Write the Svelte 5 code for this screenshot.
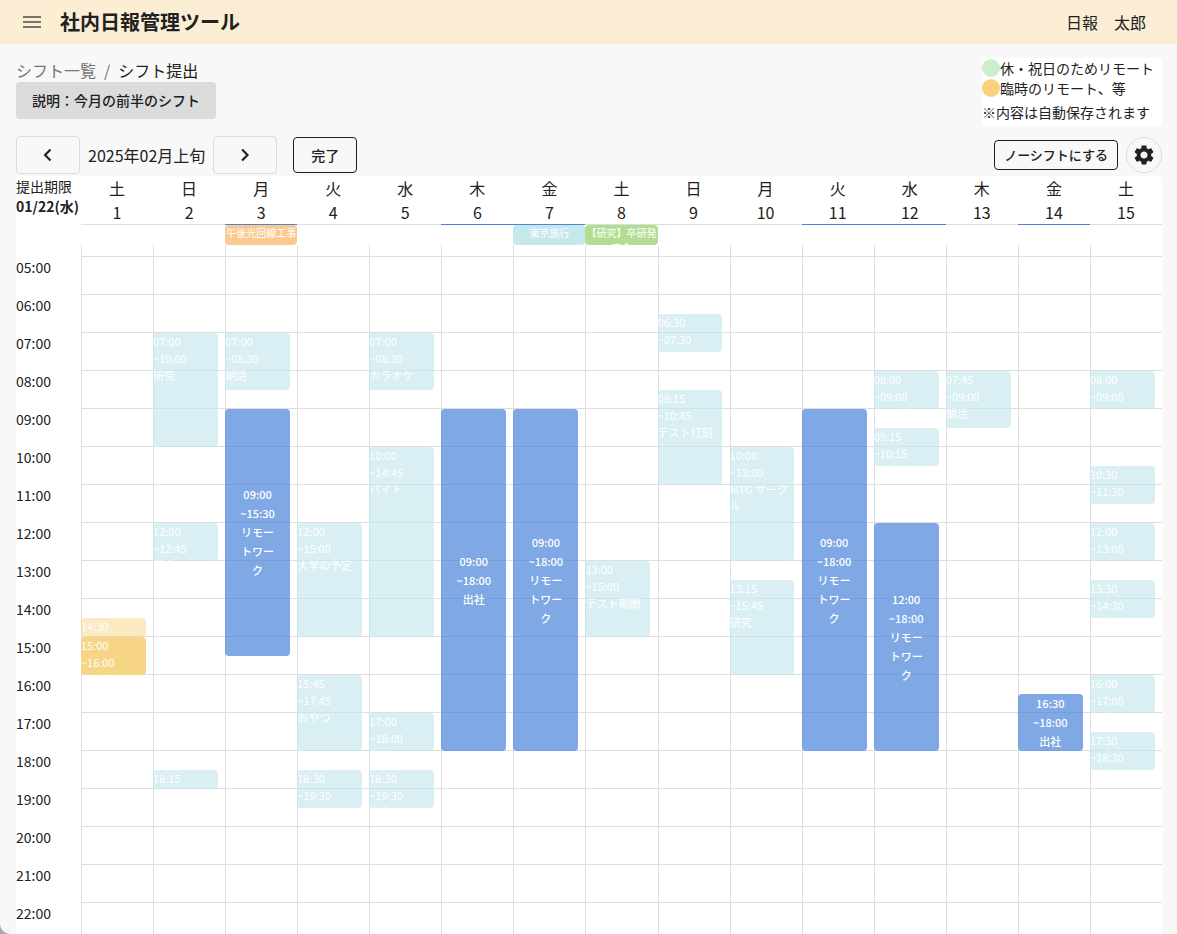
<script lang="ts">
  import { onMount } from "svelte";

  type Plan = { from: string; to: string; title: string; row: number; span: number; kind?: string };
  type Day = {
    week: string;
    allDay?: { title: string; color: string };
    shifts?: Plan[];
    plans?: Plan[];
  };

  const HOUR_HEIGHT = 38;
  const hours = Array.from({ length: 24 }, (_, i) => String(i).padStart(2, "0") + ":00");

  // row is the hour the block starts on, span is its length in hours
  const plan = (from: string, to: string, title: string, row: number, span: number, kind = "") => ({
    from,
    to,
    title,
    row,
    span,
    kind,
  });

  const days: Day[] = [
    {
      week: "土",
      plans: [
        plan("14:30", "15:00", "打ち合わせ", 14.5, 0.5, "temp light"),
        plan("15:00", "16:00", "サークル", 15, 1, "temp"),
      ],
    },
    {
      week: "日",
      plans: [
        plan("07:00", "10:00", "研究", 7, 3),
        plan("12:00", "12:45", "昼食", 12, 1),
        plan("18:15", "18:45", "夕食", 18.5, 0.5),
      ],
    },
    {
      week: "月",
      allDay: { title: "午後光回線工事", color: "orange" },
      plans: [plan("07:00", "08:30", "朝活", 7, 1.5)],
      shifts: [plan("09:00", "15:30", "リモートワーク", 9, 6.5)],
    },
    {
      week: "火",
      plans: [
        plan("12:00", "15:00", "大学の予定", 12, 3),
        plan("15:45", "17:45", "おやつ", 16, 2),
        plan("18:30", "19:30", "研究", 18.5, 1),
      ],
    },
    {
      week: "水",
      plans: [
        plan("07:00", "08:30", "カラオケ", 7, 1.5),
        plan("10:00", "14:45", "バイト", 10, 5),
        plan("17:00", "18:00", "散歩", 17, 1),
        plan("18:30", "19:30", "夕食", 18.5, 1),
      ],
    },
    { week: "木", shifts: [plan("09:00", "18:00", "出社", 9, 9)] },
    {
      week: "金",
      allDay: { title: "東京旅行", color: "cyan" },
      shifts: [plan("09:00", "18:00", "リモートワーク", 9, 9)],
    },
    {
      week: "土",
      allDay: { title: "【研究】卒研発表会", color: "green" },
      plans: [plan("13:00", "15:00", "テスト期間", 13, 2)],
    },
    {
      week: "日",
      plans: [
        plan("06:30", "07:30", "研究", 6.5, 1),
        plan("08:15", "10:45", "テスト打刻", 8.5, 2.5),
      ],
    },
    {
      week: "月",
      plans: [
        plan("10:00", "13:00", "MTG サークル", 10, 3),
        plan("13:15", "15:45", "研究", 13.5, 2.5),
      ],
    },
    { week: "火", shifts: [plan("09:00", "18:00", "リモートワーク", 9, 9)] },
    {
      week: "水",
      plans: [
        plan("08:00", "09:00", "カラオケ", 8, 1),
        plan("09:15", "10:15", "研究", 9.5, 1),
      ],
      shifts: [plan("12:00", "18:00", "リモートワーク", 12, 6)],
    },
    { week: "木", plans: [plan("07:45", "09:00", "朝活", 8, 1.5)] },
    { week: "金", shifts: [plan("16:30", "18:00", "出社", 16.5, 1.5)] },
    {
      week: "土",
      plans: [
        plan("08:00", "09:00", "テスト", 8, 1),
        plan("10:30", "11:30", "サークル", 10.5, 1),
        plan("12:00", "13:00", "バイト", 12, 1),
        plan("13:30", "14:30", "研究", 13.5, 1),
        plan("16:00", "17:00", "おやつ", 16, 1),
        plan("17:30", "18:30", "研究", 17.5, 1),
      ],
    },
  ];

  const gridRow = (p: Plan) => `${p.row * 2 + 1} / span ${p.span * 2}`;

  let body: HTMLDivElement;

  onMount(() => {
    // open just above 05:00
    body.scrollTop = HOUR_HEIGHT * 5 - 12;
  });
</script>

<div class="page">
  <header>
    <button class="menu" aria-label="メニュー">
      <svg viewBox="0 0 24 24" width="24" height="24">
        <path d="M3 18h18v-2H3v2zm0-5h18v-2H3v2zm0-7v2h18V6H3z" />
      </svg>
    </button>
    <h1>社内日報管理ツール</h1>
    <span class="user">日報　太郎</span>
  </header>

  <main>
    <div class="info">
      <div>
        <nav>
          <a href="#list">シフト一覧</a>
          <span class="slash">/</span>
          <span>シフト提出</span>
        </nav>
        <div class="note">説明：今月の前半のシフト</div>
      </div>
      <div class="legend">
        <div class="legend-row"><i class="dot holiday"></i>休・祝日のためリモート</div>
        <div class="legend-row"><i class="dot extra"></i>臨時のリモート、等</div>
        <p>※内容は自動保存されます</p>
      </div>
    </div>

    <div class="toolbar">
      <button class="arrow" aria-label="前へ">
        <svg viewBox="0 0 24 24" width="20" height="20">
          <path d="M15 5.500 8.500 12l6.500 6.500" />
        </svg>
      </button>
      <span class="term">2025年02月上旬</span>
      <button class="arrow" aria-label="次へ">
        <svg viewBox="0 0 24 24" width="20" height="20">
          <path d="M8.500 5.500 15 12l-6.500 6.500" />
        </svg>
      </button>
      <button class="done">完了</button>
      <button class="no-shift">ノーシフトにする</button>
      <button class="gear" aria-label="設定">
        <svg viewBox="0 0 24 24" width="24" height="24">
          <path
            d="M19.140 12.940c.04-.3.06-.61.06-.94 0-.32-.02-.64-.07-.94l2.030-1.580c.18-.14.23-.41.12-.61l-1.920-3.320c-.12-.22-.37-.29-.59-.22l-2.390.96c-.5-.38-1.030-.7-1.620-.94l-.36-2.540c-.04-.24-.24-.41-.48-.41h-3.840c-.24 0-.43.17-.47.41l-.36 2.540c-.59.24-1.130.57-1.620.94l-2.390-.96c-.22-.08-.47 0-.59.22L2.740 8.870c-.12.21-.08.47.12.61l2.030 1.580c-.05.3-.09.63-.09.94s.02.64.07.94l-2.030 1.580c-.18.14-.23.41-.12.61l1.920 3.320c.12.22.37.29.59.22l2.390-.96c.5.38 1.030.7 1.620.94l.36 2.540c.05.24.24.41.48.41h3.840c.24 0 .44-.17.47-.41l.36-2.540c.59-.24 1.130-.56 1.620-.94l2.390.96c.22.08.47 0 .59-.22l1.920-3.320c.12-.22.07-.47-.12-.61l-2.010-1.580zM12 15.600c-1.980 0-3.600-1.620-3.600-3.600s1.620-3.600 3.600-3.600 3.600 1.620 3.600 3.600-1.620 3.600-3.600 3.600z"
          />
        </svg>
      </button>
    </div>

    <section class="board">
      <div class="columns head">
        <div class="limit">
          提出期限
          <b>01/22(水)</b>
        </div>
        {#each days as day, i}
          <div class="date" class:worked={day.shifts}>
            <span>{day.week}</span>
            <span>{i + 1}</span>
          </div>
        {/each}
      </div>

      <div class="columns all-day">
        <div></div>
        {#each days as day}
          <div>
            {#if day.allDay}
              <div class="banner {day.allDay.color}">{day.allDay.title}</div>
            {/if}
          </div>
        {/each}
      </div>

      <div class="scroller" bind:this={body}>
        <div class="columns">
          <div>
            {#each hours as hour}
              <div class="hour">{hour}</div>
            {/each}
          </div>
          {#each days as day}
            <div class="day">
              {#each day.plans ?? [] as p}
                <div class="plan {p.kind}" style:grid-row={gridRow(p)}>
                  <span>{p.from}</span>
                  {#if p.span > 0.5}
                    <span>~{p.to}</span>
                    <span class="title">{p.title}</span>
                  {/if}
                </div>
              {/each}
              {#each day.shifts ?? [] as s}
                <button class="shift" style:grid-row={gridRow(s)}>
                  <span>{s.from}</span>
                  <span>~{s.to}</span>
                  <span>{s.title}</span>
                </button>
              {/each}
            </div>
          {/each}
        </div>
      </div>
    </section>
  </main>
</div>

<style>
  :global(body) {
    margin: 0;
    background: #a8a8a8;
  }

  .page {
    height: 100vh;
    overflow: hidden;
    box-sizing: border-box;

    display: flex;
    flex-direction: column;

    background: #f8f8f8;
    border-bottom-left-radius: 10px;

    color: #212121;
    font-family: "Noto Sans CJK JP", sans-serif;
    font-size: 16px;
    line-height: 24px;
  }

  button {
    box-sizing: border-box;
    padding: 0;
    border: 1px solid #dcdcdc;
    border-radius: 4px;
    background: transparent;
    color: inherit;
    font-family: inherit;
    font-size: 14px;
    font-weight: 500;
    cursor: pointer;
  }

  header {
    flex: none;
    height: 44px;
    padding: 0 31px 0 20px;
    display: flex;
    align-items: center;
    background: #fbeed5;
  }

  .menu {
    width: 24px;
    height: 24px;
    border: none;
  }

  .menu svg {
    display: block;
    fill: #7a7468;
  }

  h1 {
    margin: 0 0 0 16px;
    font-size: 20px;
    font-weight: 700;
  }

  .user {
    margin-left: auto;
  }

  main {
    flex: 1;
    min-height: 0;
    padding: 14px 15px 0 16px;
    display: flex;
    flex-direction: column;
  }

  .info {
    display: flex;
    justify-content: space-between;
    align-items: flex-start;
  }

  nav {
    display: flex;
    gap: 8px;
  }

  nav a,
  .slash {
    color: #757575;
    text-decoration: none;
  }

  .note {
    padding: 8px 16px;
    border-radius: 4px;
    background: #dbdbdb;
    font-size: 14px;
    font-weight: 500;
    line-height: 21px;
  }

  .legend {
    width: 180px;
    padding-bottom: 4px;
    border-radius: 4px;
    background: white;
    font-size: 14px;
  }

  .legend-row {
    display: flex;
    align-items: center;
    line-height: 20px;
  }

  .dot {
    width: 18px;
    height: 18px;
    border-radius: 50%;
  }

  .holiday {
    background: #cdeecb;
  }

  .extra {
    background: #fbd07e;
  }

  .legend p {
    margin: 0;
    padding-top: 4px;
    line-height: 20px;
  }

  .toolbar {
    margin: 10px 0 2px;
    display: flex;
    align-items: center;
    gap: 8px;
  }

  .arrow {
    width: 64px;
    height: 38px;
    display: flex;
    align-items: center;
    justify-content: center;
  }

  .arrow path {
    fill: none;
    stroke: #212121;
    stroke-width: 2.600;
  }

  .done {
    width: 64px;
    height: 36px;
    margin-left: 8px;
    border-color: #212121;
  }

  .no-shift {
    height: 30px;
    margin-left: auto;
    padding: 0 9px 2px;
    border-color: #212121;
    font-size: 13px;
  }

  .gear {
    width: 36px;
    height: 36px;
    border-radius: 50%;
    display: flex;
    align-items: center;
    justify-content: center;
  }

  .gear path {
    fill: #212121;
  }

  .board {
    flex: 1;
    min-height: 0;
    display: flex;
    flex-direction: column;
    background: white;
    border-radius: 4px 4px 0 0;
  }

  .columns {
    display: grid;
    grid-template-columns: 65px repeat(15, minmax(0, 1fr));
  }

  .limit {
    font-size: 14px;
    line-height: 20px;
    white-space: nowrap;
  }

  .limit b {
    display: block;
  }

  .date {
    display: flex;
    flex-direction: column;
    align-items: center;
    border-bottom: 1px solid #dedede;
  }

  .date.worked {
    border-color: #4a83d8;
  }

  .all-day {
    height: 20px;
  }

  .banner {
    height: 20px;
    overflow: hidden;
    border-radius: 4px;
    color: white;
    font-size: 10px;
    line-height: 15px;
    text-align: center;
  }

  .orange {
    background: #fbca90;
  }

  .cyan {
    background: #c5e8ed;
  }

  .green {
    background: #b2dd93;
  }

  .scroller {
    flex: 1;
    min-height: 0;
    overflow-y: auto;
    scrollbar-width: none;
  }

  .hour {
    height: 38px;
    font-size: 14px;
    line-height: 20px;
  }

  .day {
    display: grid;
    grid-template-columns: 90%;
    grid-template-rows: repeat(48, 19px);
    background:
      linear-gradient(#dedede, #dedede) 0 0 / 1px 100% no-repeat,
      linear-gradient(transparent 37px, #dedede 37px) 0 0 / 100% 38px;
  }

  .plan,
  .shift {
    grid-column: 1;
    overflow: hidden;
    border-radius: 4px;
    color: white;
    font-size: 11px;
  }

  .plan {
    background: #c5e8ed;
    line-height: 17px;
    opacity: 0.65;
  }

  .plan.temp {
    background: #f6d584;
    opacity: 1;
  }

  .plan.light {
    opacity: 0.5;
  }

  .plan span,
  .shift span {
    display: block;
  }

  .plan .title {
    line-height: 16px;
  }

  .shift {
    padding: 0 12px;
    border: none;
    background: rgba(74, 131, 216, 0.7);
    line-height: 19px;
  }
</style>
